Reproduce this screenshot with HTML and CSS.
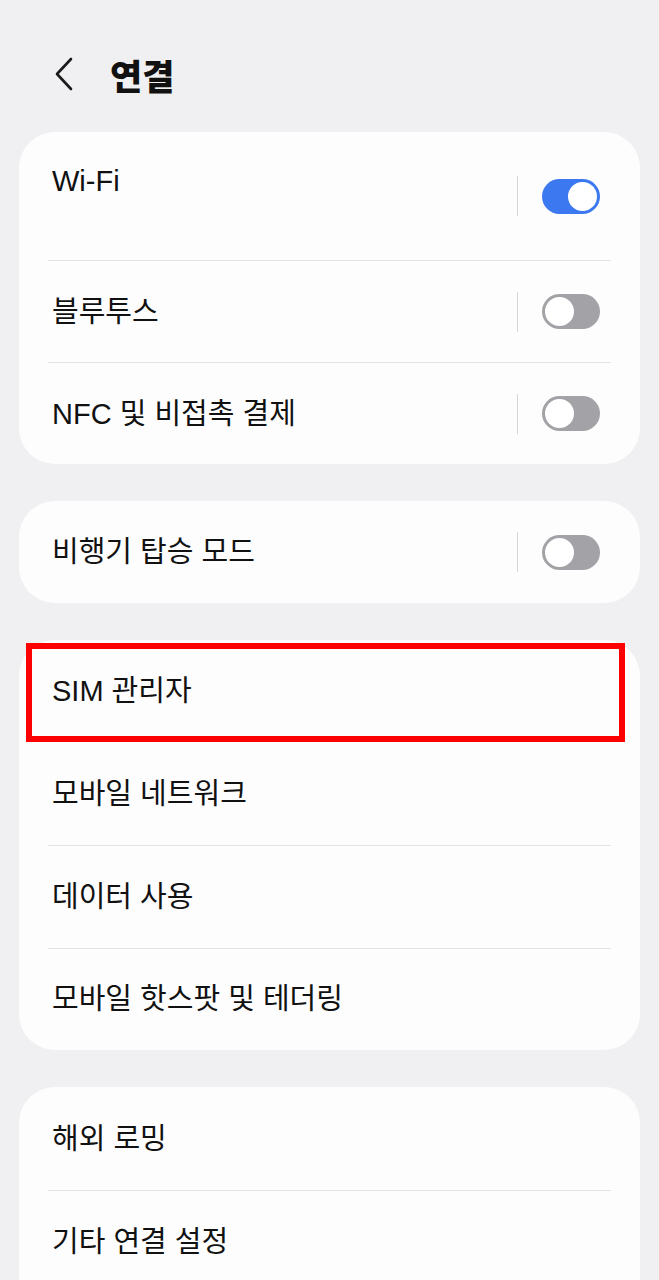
FILE: index.html
```
<!DOCTYPE html>
<html lang="ko">
<head>
<meta charset="utf-8">
<link rel="stylesheet" href="styles.css">
</head>
<body>
<header class="header">
  <svg class="back" width="20" height="34" viewBox="0 0 20 34"><polyline points="17,2 3,17 17,32" fill="none" stroke="#1a1a1a" stroke-width="2.6" stroke-linecap="round" stroke-linejoin="round"/></svg>
  <h1 class="title">연결</h1>
</header>
<main class="list">
  <section class="card">
    <div class="row row-tall">
      <span class="label label-up">Wi-Fi</span>
      <span class="vsep"></span>
      <span class="toggle on"><span class="knob"></span></span>
    </div>
    <div class="row">
      <span class="label">블루투스</span>
      <span class="vsep"></span>
      <span class="toggle"><span class="knob"></span></span>
    </div>
    <div class="row">
      <span class="label">NFC 및 비접촉 결제</span>
      <span class="vsep"></span>
      <span class="toggle"><span class="knob"></span></span>
    </div>
  </section>
  <section class="card">
    <div class="row">
      <span class="label">비행기 탑승 모드</span>
      <span class="vsep"></span>
      <span class="toggle"><span class="knob"></span></span>
    </div>
  </section>
  <section class="card card-mid">
    <div class="row row-hl">
      <span class="label">SIM 관리자</span>
      <span class="highlight"></span>
    </div>
    <div class="row no-div"><span class="label">모바일 네트워크</span></div>
    <div class="row"><span class="label">데이터 사용</span></div>
    <div class="row"><span class="label">모바일 핫스팟 및 테더링</span></div>
  </section>
  <section class="card card-last">
    <div class="row row-103"><span class="label">해외 로밍</span></div>
    <div class="row"><span class="label">기타 연결 설정</span></div>
    <div class="row"><span class="label"></span></div>
  </section>
</main>
</body>
</html>
```
FILE: styles.css
```
* { box-sizing: border-box; }
html, body { margin: 0; padding: 0; }
body {
  background: #f0f0f2;
  font-family: "Liberation Sans", "Noto Sans CJK KR", sans-serif;
  color: #111;
  width: 659px;
  height: 1280px;
  overflow: hidden;
}
.header {
  height: 132px;
  display: flex;
  align-items: center;
  padding: 16px 0 0 54px;
}
.back { display: block; margin-right: 36px; }
.title {
  margin: 0;
  font-family: "Noto Sans CJK KR", sans-serif;
  font-weight: 900;
  font-size: 35px;
  line-height: 1;
  color: #111;
}
.list {
  display: flex;
  flex-direction: column;
  gap: 37px;
  padding: 0 19px;
}
.card {
  background: #fdfdfd;
  border-radius: 36px;
}
.row {
  position: relative;
  height: 102px;
  margin: 0 29px;
  padding: 0 11px 0 4px;
  display: flex;
  align-items: center;
}
.row + .row { border-top: 1.5px solid #e3e3e5; }
.row + .row.no-div { border-top-color: transparent; }
.row-tall { height: 128px; }
.row-103 { height: 103px; }
.card-mid .row { height: 102.5px; }
.label {
  flex: 1;
  font-size: 29px;
  line-height: 34px;
  color: #111;
  white-space: nowrap;
}
.label-up { padding-bottom: 30px; }
.vsep {
  width: 1px;
  height: 40px;
  background: #d6d6d8;
  margin-right: 24px;
}
.toggle {
  width: 58px;
  height: 35px;
  border-radius: 18px;
  background: #a3a3a7;
  padding: 3px;
  display: flex;
  justify-content: flex-start;
}
.toggle.on {
  background: #3c79f0;
  justify-content: flex-end;
}
.knob {
  width: 29px;
  height: 29px;
  border-radius: 50%;
  background: #fff;
}
.highlight {
  position: absolute;
  left: -22px;
  right: -14px;
  top: 3px;
  bottom: 1px;
  border: 6px solid #ff0000;
  pointer-events: none;
}
.card-last { border-radius: 36px 36px 0 0; }
```
